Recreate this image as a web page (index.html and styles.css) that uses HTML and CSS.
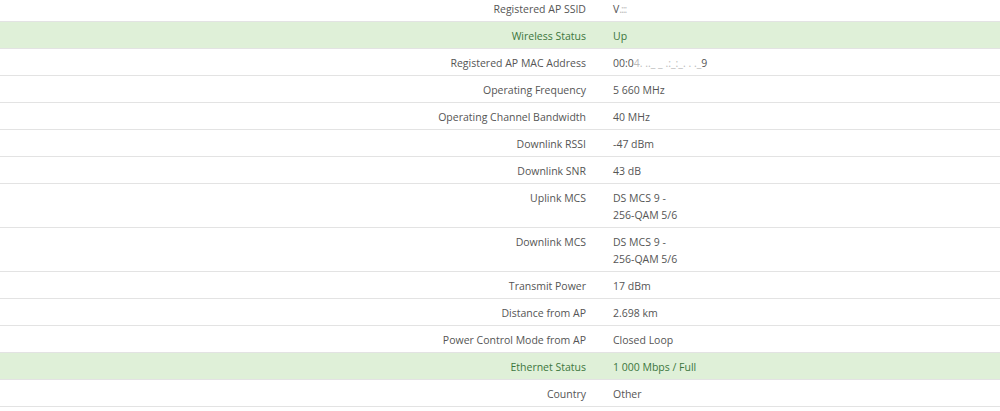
FILE: index.html
```html
<!DOCTYPE html>
<html>
<head>
<meta charset="utf-8">
<link rel="stylesheet" href="styles.css">
</head>
<body>
<table class="status">
<tbody>
<tr><td class="label">Registered AP SSID</td><td class="value">V<span class="blur">.:::</span></td></tr>
<tr class="success"><td class="label">Wireless Status</td><td class="value">Up</td></tr>
<tr><td class="label">Registered AP MAC Address</td><td class="value">00:0<span class="blur wide">4. .._ _ .:_:_. . ._</span>9</td></tr>
<tr><td class="label">Operating Frequency</td><td class="value">5 660 MHz</td></tr>
<tr><td class="label">Operating Channel Bandwidth</td><td class="value">40 MHz</td></tr>
<tr><td class="label">Downlink RSSI</td><td class="value">-47 dBm</td></tr>
<tr><td class="label">Downlink SNR</td><td class="value">43 dB</td></tr>
<tr><td class="label">Uplink MCS</td><td class="value">DS MCS 9 -<br>256-QAM 5/6</td></tr>
<tr><td class="label">Downlink MCS</td><td class="value">DS MCS 9 -<br>256-QAM 5/6</td></tr>
<tr><td class="label">Transmit Power</td><td class="value">17 dBm</td></tr>
<tr><td class="label">Distance from AP</td><td class="value">2.698 km</td></tr>
<tr><td class="label">Power Control Mode from AP</td><td class="value">Closed Loop</td></tr>
<tr class="success"><td class="label">Ethernet Status</td><td class="value">1 000 Mbps / Full</td></tr>
<tr><td class="label">Country</td><td class="value">Other</td></tr>
</tbody>
</table>
</body>
</html>
```

FILE: styles.css
```css
html, body {
  margin: 0;
  padding: 0;
  background: #fff;
}
body {
  font-family: "Open Sans", "Segoe UI", sans-serif;
  font-size: 10.5px;
  color: #555;
}
.status {
  width: 100%;
  border-collapse: collapse;
  margin-top: -5px;
}
.status td {
  padding: 6px 0 3px;
  line-height: 17px;
  vertical-align: top;
  border-bottom: 1px solid #e3e3e3;
}
.status .label {
  width: 600px;
  text-align: right;
  padding-right: 14px;
  box-sizing: border-box;
}
.status .value {
  padding-left: 13px;
}
.status tr.success td {
  background: #dff0d8;
  color: #3c763d;
}
.blur {
  color: #bbb;
  letter-spacing: -1px;
}
.blur.wide {
  letter-spacing: 0;
}
```
